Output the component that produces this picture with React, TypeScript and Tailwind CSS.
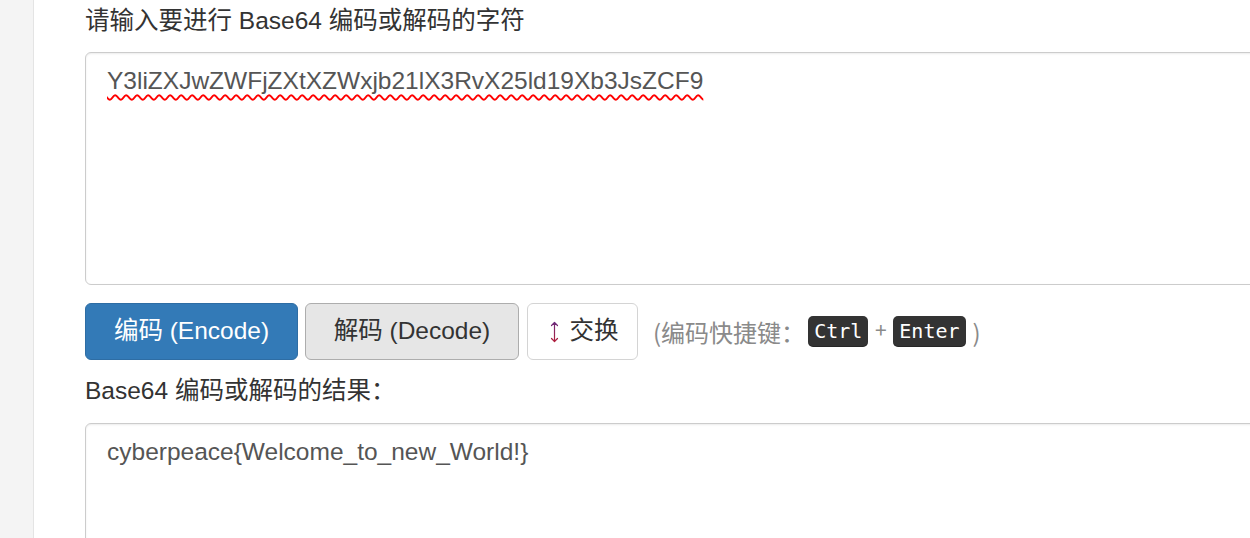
const sans = { fontFamily: '"Liberation Sans", Arial, "Noto Sans CJK SC", sans-serif' };

function SwapArrow() {
  return (
    <svg width="9" height="22" viewBox="0 0 9 22" fill="none" className="shrink-0">
      <defs>
        <linearGradient id="arrowGrad" x1="0" y1="0" x2="0" y2="1">
          <stop offset="0" stopColor="#6b2a7a" />
          <stop offset="1" stopColor="#b01e3c" />
        </linearGradient>
      </defs>
      <path d="M4.5 1.5 V20.5 M1.5 4.5 L4.5 1.5 L7.5 4.5 M1.5 17.5 L4.5 20.5 L7.5 17.5" stroke="url(#arrowGrad)" strokeWidth="1.2" strokeLinecap="round" strokeLinejoin="round" />
    </svg>
  );
}

function Kbd({ children }: { children: string }) {
  return (
    <kbd
      className="inline-block rounded-[5px] bg-[#333] px-[6px] py-[3px] text-[20px] leading-[25px] text-white shadow-[inset_0_-1px_0_rgba(0,0,0,0.25)]"
      style={{ fontFamily: '"DejaVu Sans Mono", "Liberation Mono", monospace' }}
    >
      {children}
    </kbd>
  );
}

export default function App() {
  const encoded = 'Y3liZXJwZWFjZXtXZWxjb21lX3RvX25ld19Xb3JsZCF9';

  return (
    <div className="flex h-[538px] w-[1250px] overflow-hidden bg-white text-[#333]" style={sans}>
      {/* side strip */}
      <div className="w-[34px] shrink-0 border-r border-[#e4e4e4] bg-[#f4f4f4]" />

      <div className="flex min-w-0 flex-1 flex-col pl-[51px]">
        <label className="mt-[4px] text-[24.5px] leading-[34px] text-[#333]">
          请输入要进行 Base64 编码或解码的字符
        </label>

        <div className="mt-[14px] h-[233px] w-[1200px] shrink-0 rounded-[6px] border border-[#ccc] px-[21px] pt-[11px] text-[24.5px] leading-[34px] text-[#555] shadow-[inset_0_1px_2px_rgba(0,0,0,0.08)]">
          <span className="underline decoration-[#f00] decoration-wavy decoration-[1.5px] underline-offset-[5px]">{encoded}</span>
        </div>

        <div className="mt-[18px] flex h-[57px] shrink-0 items-center">
          <button className="flex h-[57px] w-[213px] items-center justify-center rounded-[6px] border border-[#2e6da4] bg-[#337ab7] text-[24.5px] text-white">
            编码 (Encode)
          </button>
          <button className="ml-[7px] flex h-[57px] w-[214px] items-center justify-center rounded-[6px] border border-[#adadad] bg-[#e6e6e6] text-[24.5px] text-[#333]">
            解码 (Decode)
          </button>
          <button className="ml-[8px] flex h-[57px] w-[111px] items-center justify-center gap-[11px] rounded-[6px] border border-[#d4d4d4] bg-white pl-[3px] text-[24.5px] text-[#333]">
            <SwapArrow />
            <span>交换</span>
          </button>
          <div
            className="ml-[15px] flex items-center text-[24px] text-[#8a8a8a]"
            style={{ fontFamily: '"Noto Sans CJK SC", sans-serif' }}
          >
            <span className="mr-[3px]">(编码快捷键：</span>
            <Kbd>Ctrl</Kbd>
            <span className="w-[25px] pb-[3px] text-center text-[21px]">+</span>
            <Kbd>Enter</Kbd>
            <span className="ml-[7px]">)</span>
          </div>
        </div>

        <label className="mt-[14px] text-[24.5px] leading-[34px] text-[#333]">Base64 编码或解码的结果：</label>

        <div className="mt-[15px] h-[233px] w-[1200px] shrink-0 rounded-[6px] border border-[#ccc] px-[21px] pt-[11px] text-[24.5px] leading-[34px] text-[#555] shadow-[inset_0_1px_2px_rgba(0,0,0,0.08)]">
          cyberpeace{'{'}Welcome_to_new_World!{'}'}
        </div>
      </div>
    </div>
  );
}
